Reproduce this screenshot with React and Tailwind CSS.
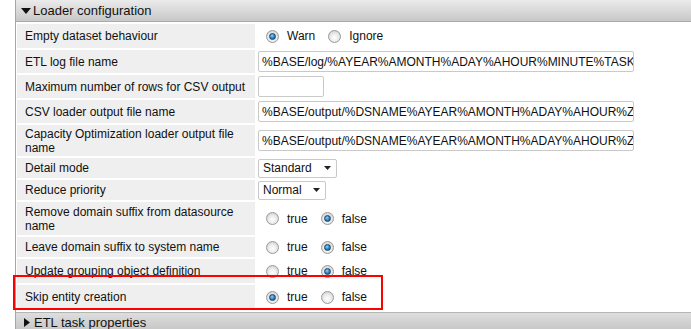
import React from 'react';

const Radio = ({ checked }) => (
  <span className="w-[13px] h-[13px] shrink-0 rounded-full border border-[#9a9a9a] bg-[radial-gradient(circle_at_50%_60%,#ffffff,#ececec_45%,#c4c4c4)] flex items-center justify-center">
    {checked && (
      <span className="w-[7px] h-[7px] rounded-full border border-[#17466e] bg-[radial-gradient(circle_at_40%_35%,#8fd0f5,#2a7fc0_55%,#0f4677)]" />
    )}
  </span>
);

const RadioGroup = ({ options, value }) => (
  <div className="flex items-center pl-[10px]">
    {options.map((opt, i) => (
      <div key={opt} className={`flex items-center ${i > 0 ? 'ml-[13px]' : ''}`}>
        <Radio checked={opt === value} />
        <span className="ml-[8px]">{opt}</span>
      </div>
    ))}
  </div>
);

const TextInput = ({ value, width }) => (
  <input
    readOnly
    value={value}
    className={`ml-[2px] h-[21px] ${width} border border-[#c9c9c9] rounded-[2px] bg-white pl-[3px] pr-0 text-[12px] text-[#111] outline-none`}
  />
);

const Select = ({ value, width }) => (
  <div className={`ml-[2px] h-[19px] ${width} border border-[#c9c9c9] rounded-[2px] bg-white flex items-center justify-between pl-[4px] pr-[5px]`}>
    <span>{value}</span>
    <svg width="7" height="4" viewBox="0 0 7 4"><path d="M0 0h7L3.5 4z" fill="#222" /></svg>
  </div>
);

const rows = [
  { label: 'Empty dataset behaviour', h: 'h-[24px]', value: <RadioGroup options={['Warn', 'Ignore']} value="Warn" /> },
  { label: 'ETL log file name', h: 'h-[23px]', value: <TextInput width="w-[376px]" value="%BASE/log/%AYEAR%AMONTH%ADAY%AHOUR%MINUTE%TASKID%" /> },
  { label: 'Maximum number of rows for CSV output', h: 'h-[23px]', value: <TextInput width="w-[66px]" value="" /> },
  { label: 'CSV loader output file name', h: 'h-[23px]', value: <TextInput width="w-[376px]" value="%BASE/output/%DSNAME%AYEAR%AMONTH%ADAY%AHOUR%ZPART%" /> },
  { label: 'Capacity Optimization loader output file name', h: 'h-[31px]', value: <TextInput width="w-[376px]" value="%BASE/output/%DSNAME%AYEAR%AMONTH%ADAY%AHOUR%ZPART%" /> },
  { label: 'Detail mode', h: 'h-[20px]', value: <Select width="w-[79px]" value="Standard" /> },
  { label: 'Reduce priority', h: 'h-[20px]', value: <Select width="w-[68px]" value="Normal" /> },
  { label: 'Remove domain suffix from datasource name', h: 'h-[33px]', value: <RadioGroup options={['true', 'false']} value="false" /> },
  { label: 'Leave domain suffix to system name', h: 'h-[20px]', value: <RadioGroup options={['true', 'false']} value="false" /> },
  { label: 'Update grouping object definition', h: 'h-[24px]', value: <RadioGroup options={['true', 'false']} value="false" /> },
  { label: 'Skip entity creation', h: 'h-[24px]', value: <RadioGroup options={['true', 'false']} value="true" /> },
];

export default function App() {
  return (
    <div className="relative w-[691px] h-[329px] overflow-hidden bg-white font-['Liberation_Sans',Arial,sans-serif] text-[12px] text-[#111]">
      <div className="ml-[15px] h-full border-l border-[#a6a6a6]">
        {/* section header */}
        <div className="h-[22px] flex items-center bg-gradient-to-b from-[#ebebeb] to-[#c8c8c8] border-b border-[#aaaaaa] pl-[5px] text-[13px]">
          <svg width="10" height="6" viewBox="0 0 10 6"><path d="M0 0h10L5 6z" fill="#111" /></svg>
          <span className="ml-[2px]">Loader configuration</span>
        </div>

        <div className="pt-[2px] pb-[3px] pl-[1px] flex flex-col gap-[2px]">
          {rows.map(({ label, h, value }) => (
            <div key={label} className={`flex ${h} gap-[1px]`}>
              <div className="w-[238px] shrink-0 bg-[#efefef] pl-[8px] pr-[4px] flex items-center leading-[14px]">
                {label}
              </div>
              <div className="flex-1 flex items-center">{value}</div>
            </div>
          ))}
        </div>

        {/* next section header */}
        <div className="h-[20px] flex items-center bg-gradient-to-b from-[#dedede] to-[#c4c4c4] border-t border-[#b5b5b5] pl-[8px] text-[13px]">
          <svg width="6" height="9" viewBox="0 0 6 9"><path d="M0 0v9l6-4.5z" fill="#111" /></svg>
          <span className="ml-[4px]">ETL task properties</span>
        </div>
      </div>

      {/* highlight annotation */}
      <div className="absolute left-[13px] top-[275px] w-[370px] h-[35px] border-2 border-[#ff0000] pointer-events-none" />
    </div>
  );
}
